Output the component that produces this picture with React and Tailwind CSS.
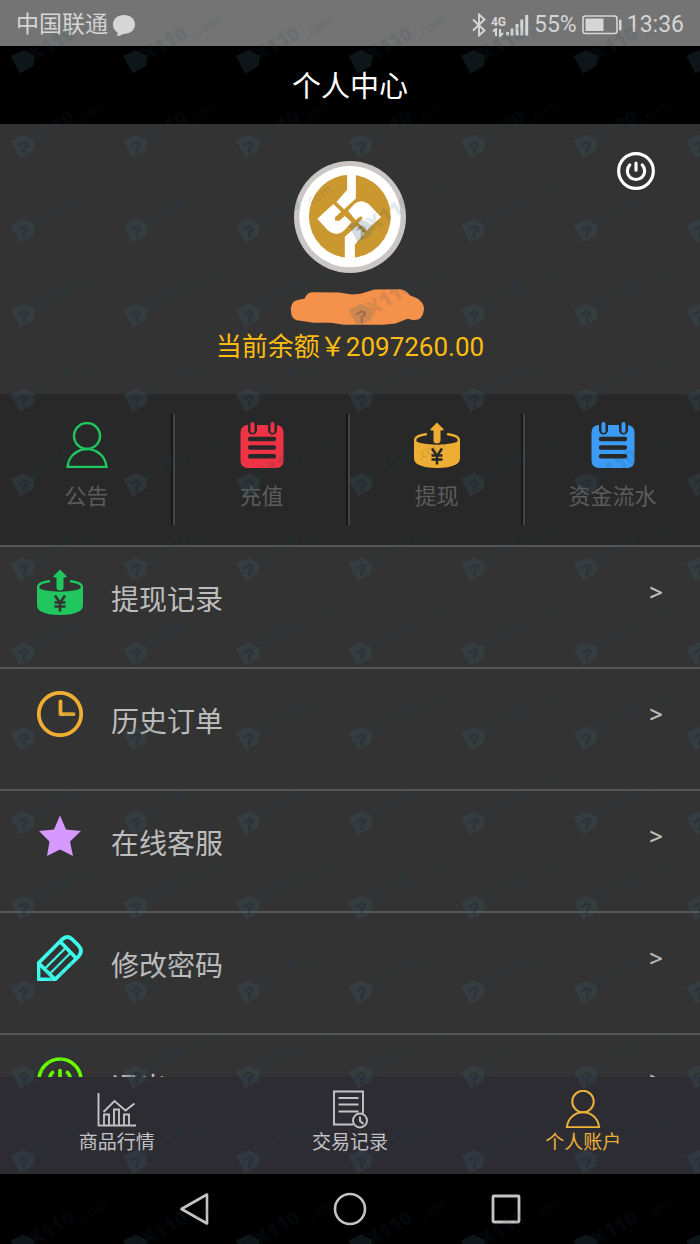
import React from "react";

const COLS = 8;
const ROWS = 17;
const TILE_W = 112.6;
const TILE_H = 84.6;

function Watermark() {
  const marks = [];
  for (let r = 0; r < ROWS; r++) {
    for (let c = -1; c < COLS; c++) {
      marks.push([23 + c * TILE_W, 62 + r * TILE_H]);
    }
  }
  return (
    <svg aria-hidden="true" className="pointer-events-none absolute inset-0 z-10 h-full w-full">
      <defs>
        <g id="mark">
          <path
            d="M-12.3-6 0.3-12 11.3-6.7 10.5 4-3 11.5Z"
            fill="#3f6272"
            opacity="0.22"
          />
          <path d="M-4.500-1 1-4.500 4-3V-1L1 1V7" fill="none" stroke="#10181c" strokeWidth="2.400" opacity="0.22" />
          <g transform="rotate(-31)" fill="#1f4450" opacity="0.11" fontFamily="Open Sans, sans-serif">
            <text x="9" y="6" fontSize="20" fontWeight="800">X110</text>
            <text x="63" y="10" fontSize="13" fontWeight="600">.com</text>
          </g>
        </g>
      </defs>
      {marks.map(([x, y]) => (
        <use key={`${x}-${y}`} href="#mark" x={x} y={y} />
      ))}
    </svg>
  );
}

function PersonIcon({ className, stroke }) {
  return (
    <svg viewBox="0 0 46 46" className={className} fill="none" stroke="currentColor" strokeWidth={stroke}>
      <circle cx="23" cy="14" r="13" />
      <path d="M3.500 45Q4.500 36 10.500 31.500Q16 27 23 27Q30 27 35.500 31.500Q41.500 36 42.500 45Z" />
    </svg>
  );
}

function NotepadIcon({ className }) {
  return (
    <svg viewBox="0 0 46 46" className={className}>
      <rect x="1.500" y="3" width="43" height="43" rx="7" fill="currentColor" />
      <g stroke="#282828" strokeLinecap="round" strokeWidth="9">
        <path d="M13.500 1V8M33.500 1V8" />
        <path d="M11 17H35M11 25.500H35M11 34.200H35" strokeWidth="4.400" />
      </g>
      <path d="M13.500 2V9M33.500 2V9" stroke="currentColor" strokeLinecap="round" strokeWidth="4" />
    </svg>
  );
}

function CashIcon({ className, cut }) {
  return (
    <svg viewBox="0 0 46 46" className={className}>
      <path
        d="M0 17C2 24.500 44 24.500 46 17V36Q46 40 42 42.500Q35 46 23 46Q11 46 4 42.500Q0 40 0 36Z"
        fill="currentColor"
      />
      <path d="M1.200 20V17.500Q1.800 13.500 12 12.200M44.800 20V17.500Q44.200 13.500 34 12.200" fill="none" stroke="currentColor" strokeWidth="2.400" strokeLinecap="round" />
      <path
        d="M23 0.500 29.500 7Q30 8.500 28.500 8.500H26.500V18.500Q26.500 21.500 23 21.500Q19.500 21.500 19.500 18.500V8.500H17.500Q16 8.500 16.500 7Z"
        fill="currentColor"
        stroke={cut}
        strokeWidth="1.500"
        paintOrder="stroke"
      />
      <path d="M18 26.500 23 34 28 26.500M17.500 33.500H28.500M17.500 37.500H28.500M23 33V42.500" fill="none" stroke={cut} strokeWidth="2.600" />
    </svg>
  );
}

function ClockIcon({ className }) {
  return (
    <svg viewBox="0 0 46 46" className={className} fill="none" stroke="currentColor" strokeWidth="3.800">
      <circle cx="23" cy="23" r="21.200" />
      <path d="M23.500 10.500V23.200H36.500" strokeLinecap="round" strokeLinejoin="round" />
    </svg>
  );
}

function StarIcon({ className }) {
  return (
    <svg viewBox="0 0 46 46" className={className} fill="currentColor">
      <path d="M23 2.500 29 16.500 44 18 33 28.500 36 43 23 36.500 10 43 12.500 28.500 2 18 17 16.500Z" />
    </svg>
  );
}

function PencilIcon({ className }) {
  return (
    <svg viewBox="0 0 46 46" className={className} fill="none" stroke="currentColor" strokeWidth="3.800" strokeLinejoin="round">
      <path d="M1.500 28 25 4.500Q30.500-0.500 35.500 4.500L41.500 10.500Q46.500 16 41.500 21.500L18 44.500H1.500Z" />
      <path d="M23.500 7 38.500 22.500M1.500 28 18 44.500" />
      <path d="M8.500 33 28 13.500M13.500 38 33 18.500" strokeWidth="2.200" />
    </svg>
  );
}

function PowerIcon({ className, stroke }) {
  return (
    <svg viewBox="0 0 46 46" className={className} fill="none" stroke="currentColor" strokeWidth={stroke}>
      <circle cx="23" cy="23" r="21" />
      <path d="M15.500 15.500A10.500 10.500 0 1 0 30.500 15.500M23 13.500V22" strokeLinecap="round" />
    </svg>
  );
}

function ChartIcon({ className }) {
  return (
    <svg viewBox="0 0 40 40" className={className} fill="none" stroke="currentColor" strokeWidth="1.900">
      <path d="M1.500 4V36.500H39" />
      <path d="M7 36V25.500H12V36M17 36V20.500H22V36M27 36V25.500H32V36" />
      <path d="M6.500 23 17.500 12 28.500 21.500 37.500 14.500" />
    </svg>
  );
}

function RecordIcon({ className }) {
  return (
    <svg viewBox="0 0 40 40" className={className} fill="none" stroke="currentColor" strokeWidth="1.900">
      <path d="M23 35.500H4V2.500H33V24" />
      <path d="M8.500 9H28.500M8.500 15.500H28.500M8.500 22.500H28.500" />
      <circle cx="30" cy="31.500" r="7" />
      <path d="M30 27.500V32L33.500 35" />
    </svg>
  );
}

function Logo() {
  return (
    <svg viewBox="73 63 335 340" className="h-[114px] w-[114px]" role="img" aria-label="头像">
      <circle cx="240.500" cy="233" r="167" fill="#cac6c5" />
      <circle cx="240.500" cy="232" r="151" fill="#fff" />
      <ellipse cx="240" cy="231" rx="122" ry="124" fill="#cb982f" />
      <g fill="#fff">
        <path d="M232 98H258V178L223 210 200 188 232 152Z" />
        <path d="M225 364V292L261 260 283 283 255 315V364Z" />
        <path d="M143 238 191 194 214 217 196 234V244H209L225 230 245 249 223 273Q201 294 175 273Z" />
        <path d="M235 214 253 195Q272 177 296 194L333 233 289 274 265 250 278 237 276 231 265 235 257 242Z" />
      </g>
    </svg>
  );
}

const actions = [
  { label: "公告", color: "text-[#20c65e]", icon: <PersonIcon className="h-[46px] w-[46px]" stroke="2.4" /> },
  { label: "充值", color: "text-[#ee3344]", icon: <NotepadIcon className="h-[46px] w-[46px]" /> },
  { label: "提现", color: "text-[#eeae33]", icon: <CashIcon className="h-[46px] w-[46px]" cut="#282828" /> },
  { label: "资金流水", color: "text-[#3b9bf5]", icon: <NotepadIcon className="h-[46px] w-[46px]" /> },
];

const menu = [
  { label: "提现记录", color: "text-[#20c65e]", icon: <CashIcon className="h-[46px] w-[46px]" cut="#333333" /> },
  { label: "历史订单", color: "text-[#eeae33]", icon: <ClockIcon className="h-[46px] w-[46px]" /> },
  { label: "在线客服", color: "text-[#d699ff]", icon: <StarIcon className="h-[46px] w-[46px]" /> },
  { label: "修改密码", color: "text-[#3dffec]", icon: <PencilIcon className="h-[46px] w-[46px]" /> },
  { label: "退出", color: "text-[#66ff00]", icon: <PowerIcon className="h-[46px] w-[46px]" stroke="3.6" /> },
];

const tabs = [
  { label: "商品行情", color: "text-[#c3c3c5]", icon: <ChartIcon className="h-10 w-10" /> },
  { label: "交易记录", color: "text-[#c3c3c5]", icon: <RecordIcon className="h-10 w-10" /> },
  { label: "个人账户", color: "text-[#f0b23a]", icon: <PersonIcon className="h-[38px] w-10" stroke="2.4" /> },
];

function StatusBar() {
  return (
    <div className="flex h-[46px] shrink-0 items-center justify-between bg-[#747474] px-4 pt-1 text-[23px] text-[#d6d6d6]">
      <div className="flex items-center gap-1">
        <span>中国联通</span>
        <svg viewBox="0 0 24 24" className="h-6 w-6" fill="currentColor" aria-hidden="true">
          <path d="M12 2C5.500 2 1 6 1 11.500C1 15 2.500 17.500 5.500 19.500Q6 21.500 4.500 23Q8.500 22.800 11 21C18.500 21 23 17 23 11.500C23 6 18.500 2 12 2Z" />
        </svg>
      </div>
      <div className="flex items-center gap-1">
        <svg viewBox="0 0 16 24" className="h-6 w-4" fill="none" stroke="currentColor" strokeWidth="1.900" aria-hidden="true">
          <path d="M2 6.500 13.500 17.500 8 22.500V1.500L13.500 6.500 2 17.500" />
        </svg>
        <div className="flex items-end">
          <div className="flex flex-col items-center text-[12px] leading-3 font-bold">
            <span>4G</span>
            <svg viewBox="0 0 12 9" className="h-[9px] w-3" fill="none" stroke="currentColor" strokeWidth="2" aria-hidden="true">
              <path d="M1 3.500 4 1V8M8 1V8L11 5" />
            </svg>
          </div>
          <svg viewBox="0 0 24 24" className="h-6 w-6" fill="currentColor" aria-hidden="true">
            <path d="M0 19H3V22.500H0ZM4.700 15.500H7.700V22.500H4.700ZM9.500 11H12.500V22.500H9.500ZM14.300 6.500H17.300V22.500H14.300ZM19.200 2H22.200V22.500H19.200Z" />
          </svg>
        </div>
        <span>55%</span>
        <svg viewBox="0 0 42 22" className="h-[22px] w-[42px]" aria-hidden="true">
          <rect x="2" y="2" width="34" height="17.500" rx="2.500" fill="none" stroke="currentColor" strokeWidth="1.600" />
          <rect x="4.500" y="4.500" width="18" height="12.500" fill="currentColor" />
          <rect x="38" y="5.500" width="2.500" height="11" rx="1" fill="currentColor" />
        </svg>
        <time>13:36</time>
      </div>
    </div>
  );
}

export default function App() {
  return (
    <div className="relative flex h-screen flex-col overflow-hidden bg-[#333333] font-['Roboto','Noto_Sans_CJK_SC',sans-serif]">
      <StatusBar />
      <header className="flex h-[78px] shrink-0 items-center justify-center bg-black pt-1">
        <h1 className="text-[29px] leading-10 text-white">个人中心</h1>
      </header>

      <section className="flex h-[270px] shrink-0 flex-col items-center">
        <div className="grid w-full grid-cols-[1fr_auto_1fr] px-[45px] pt-9">
          <span />
          <Logo />
          <button type="button" aria-label="关机" className="-mt-2 h-[38px] w-[38px] justify-self-end text-white">
            <PowerIcon className="h-full w-full" stroke="3.800" />
          </button>
        </div>
        <svg viewBox="58 444 406 113" className="mt-[14px] ml-[14px] h-[38px] w-[135px]" aria-hidden="true">
          <path
            d="M61 515Q58 488 76 481L102 475Q108 457 125 456L205 457 245 463 270 461 312 448 388 447Q408 449 418 465L440 474Q460 486 461 505Q460 530 445 537L430 540 412 536 375 550 340 554H220L180 548H130L78 540Q62 536 61 515Z"
            fill="#f4914a"
          />
        </svg>
        <p className="text-[26px] leading-[42px] text-[#fdbd10]">当前余额￥2097260.00</p>
      </section>

      <section className="grid shrink-0 grid-cols-4 bg-[#282828] py-5">
        {actions.map((a) => (
          <button
            key={a.label}
            type="button"
            className="flex h-[111px] flex-col items-center border-r-2 border-[#444444] pt-2 shadow-[inset_-2px_0_0_#171717] last:border-r-0 last:shadow-none"
          >
            <span className={a.color}>{a.icon}</span>
            <span className="mt-3 text-[22px] leading-[34px] text-[#5c5c5c]">{a.label}</span>
          </button>
        ))}
      </section>

      <ul className="min-h-0 flex-1 overflow-y-auto [scrollbar-width:none]">
        {menu.map((m) => (
          <li key={m.label} className="border-t-2 border-[#575757]">
            <a href="#" className="flex h-[120px] items-start px-[37px] pt-[22px] text-[#bdbdbd]">
              <span className={m.color}>{m.icon}</span>
              <span className="ml-7 flex-1 text-[28px] leading-[64px]">{m.label}</span>
              <span className="font-['Open_Sans',sans-serif] text-[24px] leading-[46px] font-semibold">&gt;</span>
            </a>
          </li>
        ))}
      </ul>

      <nav className="grid h-[97px] shrink-0 grid-cols-3 bg-[#2d2c33]">
        {tabs.map((t) => (
          <a key={t.label} href="#" className={`flex flex-col items-center pt-3 ${t.color}`}>
            <span className="flex h-10 items-center">{t.icon}</span>
            <span className="text-[19px] leading-7">{t.label}</span>
          </a>
        ))}
      </nav>

      <div className="h-[70px] shrink-0 bg-black text-[#c4c4c4]">
        <div className="mx-auto grid h-full w-2/3 grid-cols-3 place-items-center">
          <button type="button" aria-label="返回">
            <svg viewBox="0 0 34 34" className="h-[34px] w-[34px]" fill="none" stroke="currentColor" strokeWidth="2.600" strokeLinejoin="round">
              <path d="M4.500 17 30 2.500V31.500Z" />
            </svg>
          </button>
          <button type="button" aria-label="主页">
            <svg viewBox="0 0 34 34" className="h-[34px] w-[34px]" fill="none" stroke="currentColor" strokeWidth="2.600">
              <circle cx="17" cy="17" r="15" />
            </svg>
          </button>
          <button type="button" aria-label="最近任务">
            <svg viewBox="0 0 34 34" className="h-[34px] w-[34px]" fill="none" stroke="currentColor" strokeWidth="2.800" strokeLinejoin="round">
              <rect x="4" y="4" width="26" height="26" rx="1" />
            </svg>
          </button>
        </div>
      </div>

      <Watermark />
    </div>
  );
}
